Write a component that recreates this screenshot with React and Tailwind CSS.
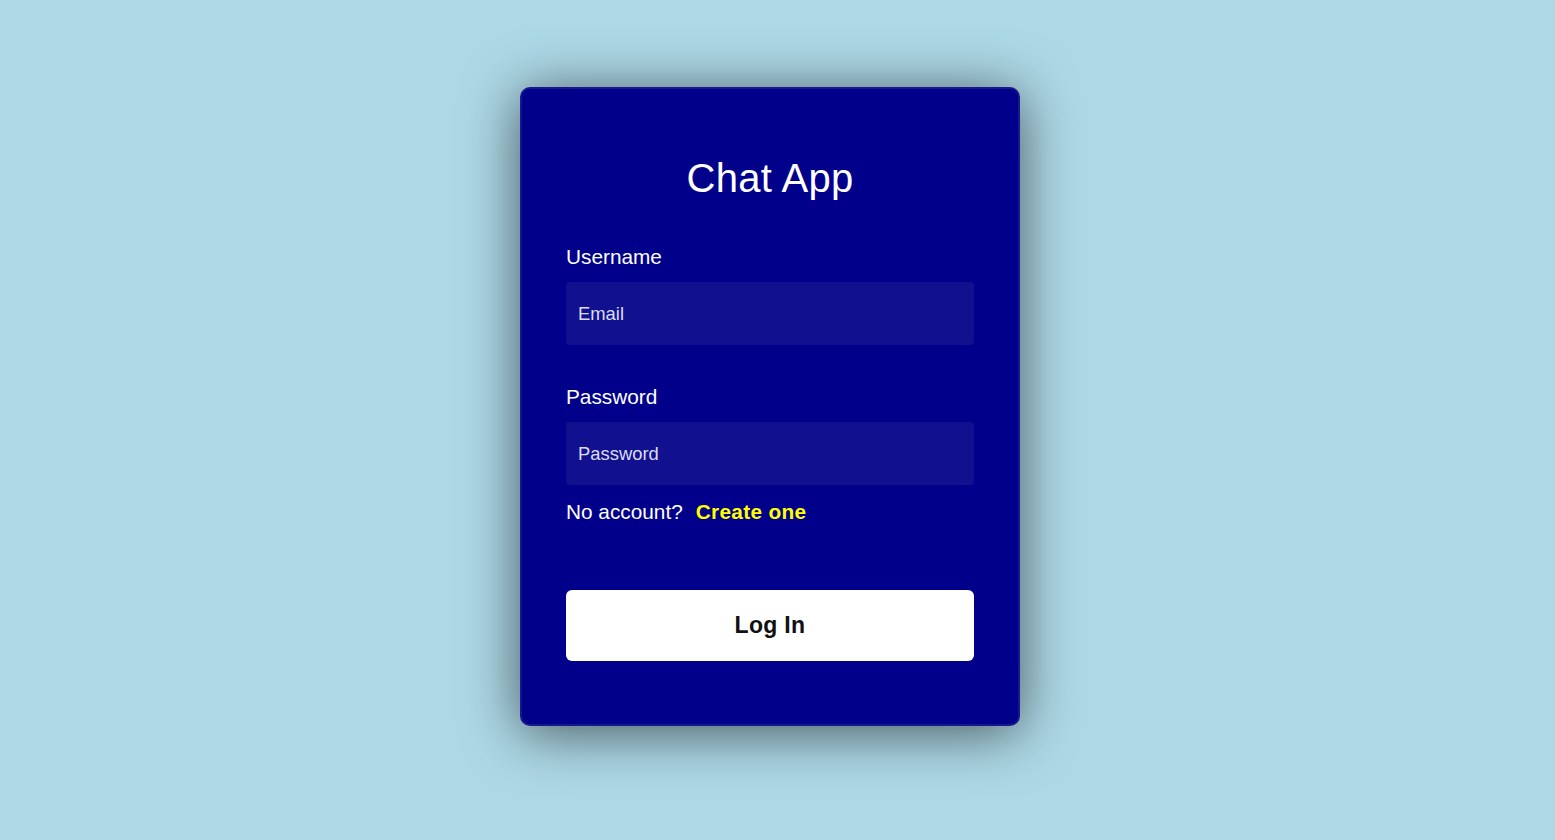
export default function App() {
  return (
    <div
      className="min-h-screen w-full bg-[#add8e6] flex justify-center items-start pt-[87px] pr-[15px]"
      style={{ fontFamily: '"Liberation Sans", Arial, sans-serif' }}
    >
      <div className="w-[500px] bg-[#00008b] border-2 border-[#17178f] rounded-[10px] px-[44px] pt-[66px] pb-[63px] shadow-[0_6px_55px_rgba(0,0,0,0.6)] flex flex-col">
        <h1 className="text-white text-[40px] leading-[46px] text-center font-normal tracking-[0.3px]">Chat App</h1>
        <label className="text-white text-[20.8px] leading-[24px] mt-[44px]">Username</label>
        <input
          type="text"
          placeholder="Email"
          className="mt-[13px] h-[63px] w-full bg-[#11118f] rounded-[4px] px-[12px] text-[18.4px] text-white placeholder:text-[#dcdcf0] outline-none"
        />
        <label className="text-white text-[20.8px] leading-[24px] mt-[40px]">Password</label>
        <input
          type="password"
          placeholder="Password"
          className="mt-[13px] h-[63px] w-full bg-[#11118f] rounded-[4px] px-[12px] text-[18.4px] text-white placeholder:text-[#dcdcf0] outline-none"
        />
        <p className="text-white text-[20.8px] leading-[24px] mt-[15px]">
          No account?<span className="ml-[13px] font-bold text-[#ffff00] tracking-[0.3px]">Create one</span>
        </p>
        <button className="mt-[66px] h-[71px] w-full bg-white rounded-[6px] text-[#111] font-bold text-[23px] tracking-[0.3px]">
          Log In
        </button>
      </div>
    </div>
  );
}
